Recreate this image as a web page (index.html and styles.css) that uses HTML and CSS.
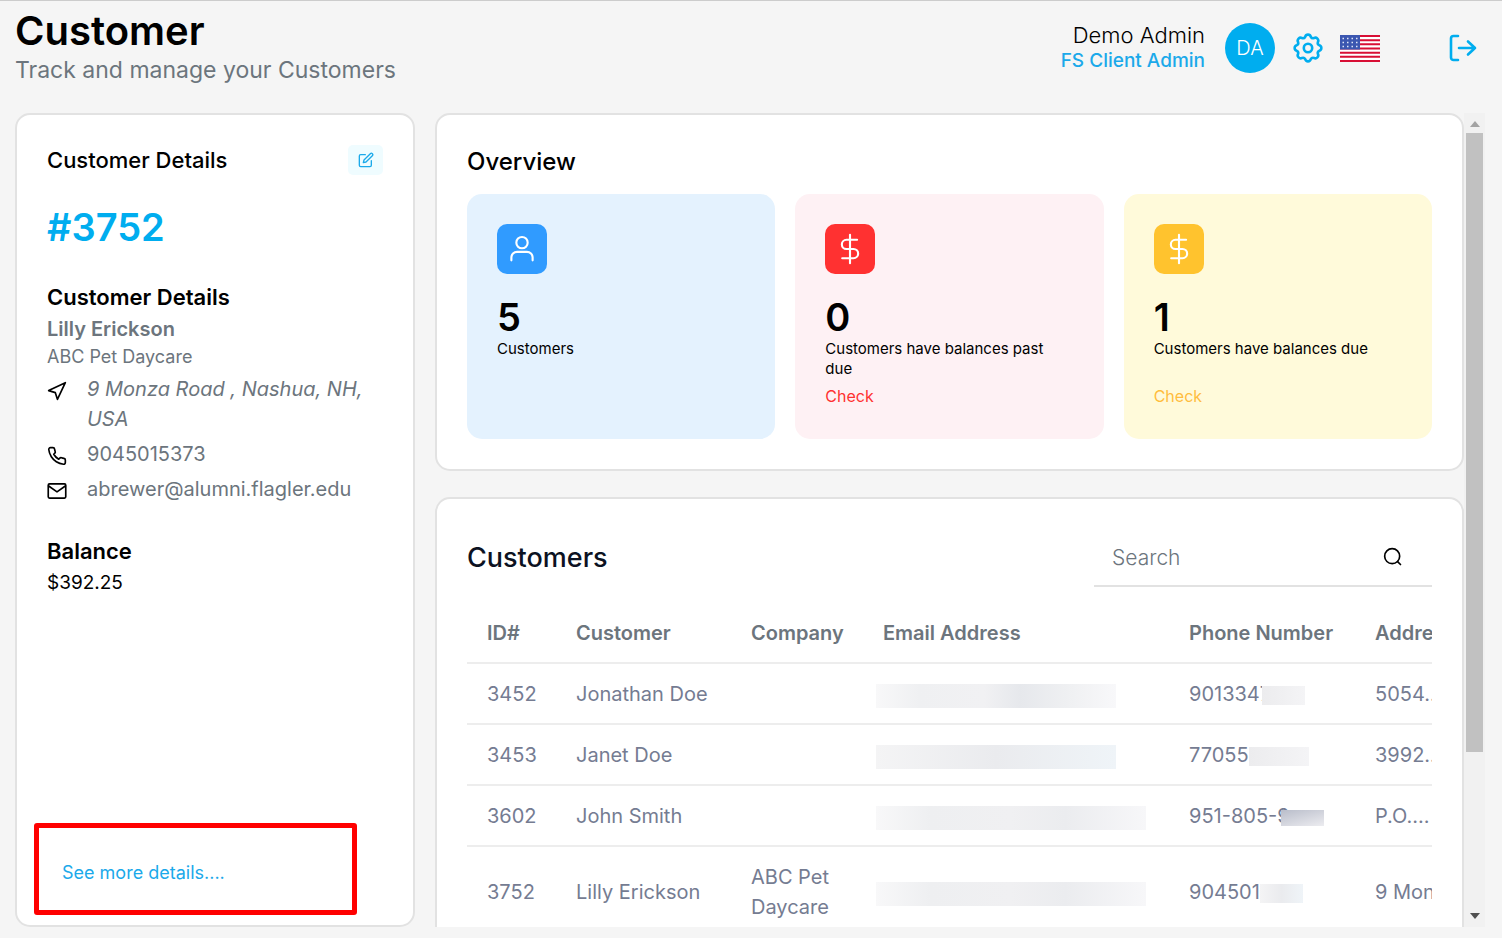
FILE: index.html
```html
<!DOCTYPE html>
<html lang="en">
<head>
    <meta charset="UTF-8">
    <meta name="viewport" content="width=device-width, initial-scale=1.0">
    <title>Customer</title>
    <link rel="stylesheet" href="styles.css">
</head>
<body>
    <header class="topbar">
        <div class="page-heading">
            <h1>Customer</h1>
            <p>Track and manage your Customers</p>
        </div>
        <div class="user-area">
            <div class="user-names">
                <span class="user-name">Demo Admin</span>
                <span class="user-role">FS Client Admin</span>
            </div>
            <div class="avatar">DA</div>
            <button class="icon-button settings" aria-label="Settings">
                <svg width="32" height="32" viewBox="0 0 32 32" fill="none" stroke="currentColor" stroke-width="2.6" stroke-linejoin="round"><circle cx="16" cy="16" r="4.200"/><path d="M13.200 4.800a2.900 2.900 0 0 1 5.600 0a2.600 2.600 0 0 0 3.150 1.300a2.900 2.900 0 0 1 3.950 3.950a2.600 2.600 0 0 0 1.300 3.150a2.900 2.900 0 0 1 0 5.600a2.600 2.600 0 0 0-1.300 3.150a2.900 2.900 0 0 1-3.950 3.950a2.600 2.600 0 0 0-3.150 1.300a2.900 2.900 0 0 1-5.600 0a2.600 2.600 0 0 0-3.150-1.300a2.900 2.900 0 0 1-3.950-3.950a2.600 2.600 0 0 0-1.300-3.150a2.900 2.900 0 0 1 0-5.600a2.600 2.600 0 0 0 1.300-3.150a2.900 2.900 0 0 1 3.950-3.950a2.600 2.600 0 0 0 3.150-1.300z"/></svg>
            </button>
            <button class="icon-button flag" aria-label="Language">
                <svg width="40" height="27" viewBox="0 0 40 27">
                    <rect width="40" height="27" fill="#fff"/>
                    <path d="M0 1h40M0 5.200h40M0 9.300h40M0 13.500h40M0 17.700h40M0 21.800h40M0 26h40" stroke="#d80f35" stroke-width="2"/>
                    <rect width="20" height="14.500" fill="#3b56b0"/>
                    <path d="M2.500 3.500h16M2.500 7.500h16M2.500 11.500h16" stroke="#dfe6f7" stroke-width="1.500" stroke-dasharray="1.500 3"/>
                </svg>
            </button>
            <button class="icon-button logout" aria-label="Log out">
                <svg width="28" height="28" viewBox="0 0 28 28" fill="none" stroke="currentColor" stroke-width="2.6" stroke-linecap="round" stroke-linejoin="round"><path d="M9 2H4.500a2.500 2.500 0 0 0-2.500 2.500v19a2.500 2.500 0 0 0 2.500 2.500H9M10 14h16M19 7.500l7 6.500-7 6.500"/></svg>
            </button>
        </div>
    </header>

    <main class="content">
        <section class="card details">
            <div class="details-head">
                <h2>Customer Details</h2>
                <button class="edit-button" aria-label="Edit customer">
                    <svg width="16" height="16" viewBox="0 0 24 24" fill="none" stroke="currentColor" stroke-width="2" stroke-linecap="round" stroke-linejoin="round"><path d="M11 4H4a2 2 0 0 0-2 2v14a2 2 0 0 0 2 2h14a2 2 0 0 0 2-2v-7"/><path d="M18.500 2.500a2.120 2.120 0 0 1 3 3L12 15l-4 1 1-4z"/></svg>
                </button>
            </div>
            <p class="customer-id">#3752</p>

            <h3>Customer Details</h3>
            <p class="customer-name">Lilly Erickson</p>
            <p class="customer-company">ABC Pet Daycare</p>
            <ul class="contact-list">
                <li>
                    <svg class="contact-icon" viewBox="0 0 24 24"><path d="M2 11.500L22 2l-9.500 20-2.500-8z"/></svg>
                    <address>9 Monza Road , Nashua, NH, USA</address>
                </li>
                <li>
                    <svg class="contact-icon" viewBox="0 0 24 24"><path d="M22 16.920v3a2 2 0 0 1-2.180 2 19.790 19.790 0 0 1-8.630-3.070 19.500 19.500 0 0 1-6-6 19.790 19.790 0 0 1-3.070-8.670A2 2 0 0 1 4.110 2h3a2 2 0 0 1 2 1.720c.13.960.36 1.900.7 2.810a2 2 0 0 1-.45 2.110L8.090 9.910a16 16 0 0 0 6 6l1.270-1.270a2 2 0 0 1 2.110-.45c.91.340 1.850.570 2.810.7A2 2 0 0 1 22 16.920z"/></svg>
                    <span>9045015373</span>
                </li>
                <li>
                    <svg class="contact-icon" viewBox="0 0 24 24"><rect x="1.500" y="3.500" width="21" height="17" rx="1.500"/><path d="M2 6l10 7 10-7"/></svg>
                    <span>abrewer@alumni.flagler.edu</span>
                </li>
            </ul>

            <h3>Balance</h3>
            <p class="balance">$392.25</p>

            <div class="more-box">
                <a href="#">See more details....</a>
            </div>
        </section>

        <div class="scroll-area">
            <section class="card overview">
                <h2>Overview</h2>
                <div class="tiles">
                    <div class="tile tile-blue">
                        <span class="tile-icon">
                            <svg width="34" height="34" viewBox="0 0 24 24"><circle cx="12" cy="7.500" r="4"/><path d="M4.500 20v-2a4 4 0 0 1 4-4h7a4 4 0 0 1 4 4v2"/></svg>
                        </span>
                        <strong>5</strong>
                        <p>Customers</p>
                    </div>
                    <div class="tile tile-red">
                        <span class="tile-icon">
                            <svg width="34" height="34" viewBox="0 0 24 24"><path d="M12 2v20M17 5.500H9.500a3.250 3.250 0 0 0 0 6.500h5a3.250 3.250 0 0 1 0 6.500H6.500"/></svg>
                        </span>
                        <strong>0</strong>
                        <p>Customers have balances past due</p>
                        <a href="#">Check</a>
                    </div>
                    <div class="tile tile-yellow">
                        <span class="tile-icon">
                            <svg width="34" height="34" viewBox="0 0 24 24"><path d="M12 2v20M17 5.500H9.500a3.250 3.250 0 0 0 0 6.500h5a3.250 3.250 0 0 1 0 6.500H6.500"/></svg>
                        </span>
                        <strong>1</strong>
                        <p>Customers have balances due</p>
                        <a href="#">Check</a>
                    </div>
                </div>
            </section>

            <section class="card customers">
                <div class="customers-head">
                    <h2>Customers</h2>
                    <div class="search">
                        <input type="text" placeholder="Search" aria-label="Search">
                        <button class="icon-button" aria-label="Search customers">
                            <svg width="20" height="20" viewBox="0 0 24 24" fill="none" stroke="currentColor" stroke-width="2" stroke-linecap="round"><circle cx="11" cy="11" r="9"/><path d="M17.500 17.500L21 21"/></svg>
                        </button>
                    </div>
                </div>
                <div class="table-wrap">
                    <table>
                        <colgroup>
                            <col class="col-id">
                            <col class="col-customer">
                            <col class="col-company">
                            <col class="col-email">
                            <col class="col-phone">
                            <col class="col-address">
                        </colgroup>
                        <thead>
                            <tr><th>ID#</th><th>Customer</th><th>Company</th><th>Email Address</th><th>Phone Number</th><th>Address</th></tr>
                        </thead>
                        <tbody>
                            <tr>
                                <td>3452</td><td>Jonathan Doe</td><td></td>
                                <td><span class="mask mask-email"></span></td>
                                <td>9013347<span class="mask mask-phone"></span></td>
                                <td>5054...</td>
                            </tr>
                            <tr>
                                <td>3453</td><td>Janet Doe</td><td></td>
                                <td><span class="mask mask-email mask-tint"></span></td>
                                <td>77055<span class="mask mask-phone mask-wide"></span></td>
                                <td>3992...</td>
                            </tr>
                            <tr>
                                <td>3602</td><td>John Smith</td><td></td>
                                <td><span class="mask mask-email mask-long"></span></td>
                                <td>951-805-9<span class="mask mask-phone mask-dark"></span></td>
                                <td>P.O....</td>
                            </tr>
                            <tr>
                                <td>3752</td><td>Lilly Erickson</td><td class="wrap">ABC Pet Daycare</td>
                                <td><span class="mask mask-email mask-long"></span></td>
                                <td>904501<span class="mask mask-phone mask-tint"></span></td>
                                <td>9 Monza</td>
                            </tr>
                        </tbody>
                    </table>
                </div>
            </section>
        </div>

        <div class="scrollbar" aria-hidden="true">
            <svg class="arrow arrow-up" viewBox="0 0 10 6"><path d="M5 0l5 6H0z"/></svg>
            <div class="track"><div class="thumb"></div></div>
            <svg class="arrow arrow-down" viewBox="0 0 10 6"><path d="M0 0h10L5 6z"/></svg>
        </div>
    </main>
</body>
</html>
```

FILE: styles.css
```css
/* Base styles */
* {
    box-sizing: border-box;
}

body {
    margin: 0;
    height: 100vh;
    display: flex;
    flex-direction: column;
    font-family: "Inter", sans-serif;
    font-size: 20px;
    line-height: 30px;
    color: #000;
    background: #f5f5f5;
    border-top: 1px solid #ccc;
    overflow: hidden;
}

h1, h2, h3, p, ul {
    margin: 0;
    padding: 0;
}

h2, h3 {
    font-weight: 600;
}

a {
    text-decoration: none;
}

svg {
    display: block;
}

.icon-button {
    padding: 0;
    border: none;
    background: none;
    color: #00adef;
    cursor: pointer;
}

/* Top bar */
.topbar {
    display: flex;
    justify-content: space-between;
    align-items: flex-start;
    height: 112px;
    padding: 8px 25px 0 15px;
}

.page-heading h1 {
    font-size: 40px;
    line-height: 44px;
    font-weight: 600;
}

.page-heading p {
    font-size: 23px;
    line-height: 34px;
    color: #6c757d;
}

.user-area {
    display: flex;
    align-items: center;
    padding-top: 13px;
}

.user-names {
    display: flex;
    flex-direction: column;
    align-items: flex-end;
    line-height: 26px;
    margin-right: 20px;
}

.user-name {
    font-size: 22px;
    font-weight: 300;
}

.user-role {
    font-size: 19px;
    font-weight: 500;
    color: #1ba9ea;
}

.avatar {
    width: 50px;
    height: 50px;
    border-radius: 50%;
    background: #00adef;
    color: #fff;
    font-weight: 300;
    line-height: 50px;
    text-align: center;
}

.settings {
    margin: 0 16px 0 17px;
}

.logout {
    margin-left: 69px;
}

/* Cards */
.content {
    flex: 1;
    min-height: 0;
    display: flex;
    padding: 0 17px 11px 15px;
}

.card {
    background: #fff;
    border: 2px solid #e2e2e2;
    border-radius: 15px;
    padding: 30px;
}

/* Customer details */
.details {
    flex: 0 0 400px;
    display: flex;
    flex-direction: column;
    margin-right: 20px;
}

.details-head {
    display: flex;
    justify-content: space-between;
    align-items: center;
}

.details-head h2 {
    font-size: 22px;
    font-weight: 500;
}

.edit-button {
    display: flex;
    justify-content: center;
    align-items: center;
    width: 35px;
    height: 30px;
    padding: 0;
    border: none;
    border-radius: 5px;
    background: #effcff;
    color: #1ba9ea;
}

.customer-id {
    margin: 28px 0 30px;
    font-size: 38px;
    line-height: 48px;
    font-weight: 600;
    color: #00adef;
}

.details h3 {
    font-size: 22px;
    line-height: 32px;
}

.customer-name {
    line-height: 32px;
    font-weight: 600;
    color: #6c757d;
}

.customer-company {
    font-size: 18px;
    line-height: 24px;
    color: #6c757d;
}

.contact-list {
    list-style: none;
    margin: 5px 0 26px;
    color: #6c757d;
}

.contact-list li {
    display: flex;
    gap: 20px;
    margin-bottom: 5px;
}

.contact-icon {
    flex: none;
    width: 20px;
    height: 20px;
    margin-top: 7px;
    fill: none;
    stroke: #000;
    stroke-width: 2;
    stroke-linecap: round;
    stroke-linejoin: round;
}

.balance {
    font-size: 19px;
    line-height: 32px;
}

.more-box {
    margin: auto 26px -20px -13px;
    padding: 34px 23px 26px;
    border: 5px solid #f00;
    border-radius: 3px;
    font-size: 18px;
    line-height: 22px;
}

.more-box a {
    color: #1ba9ea;
}

/* Right side */
.scroll-area {
    flex: 1;
    min-width: 0;
    display: flex;
    flex-direction: column;
    gap: 26px;
    overflow: hidden;
}

.scroll-area .card {
    flex: none;
}

.overview h2 {
    margin: 2px 0 17px;
    font-size: 24px;
    font-weight: 500;
}

.tiles {
    display: grid;
    grid-template-columns: repeat(3, 1fr);
    gap: 20px;
}

.tile {
    display: flex;
    flex-direction: column;
    align-items: flex-start;
    min-height: 245px;
    padding: 30px;
    border-radius: 15px;
}

.tile-blue {
    background: #e4f2fe;
}

.tile-red {
    background: #fef1f4;
}

.tile-yellow {
    background: #fffada;
}

.tile-icon {
    display: flex;
    justify-content: center;
    align-items: center;
    width: 50px;
    height: 50px;
    border-radius: 10px;
}

.tile-icon svg {
    fill: none;
    stroke: #fff;
    stroke-width: 1.5;
    stroke-linecap: round;
    stroke-linejoin: round;
}

.tile-blue .tile-icon {
    background: #309bff;
}

.tile-red .tile-icon {
    background: #ff3131;
}

.tile-yellow .tile-icon {
    background: #ffc32e;
}

.tile strong {
    margin-top: 21px;
    font-size: 38px;
    line-height: 44px;
    font-weight: 600;
}

.tile p {
    min-height: 40px;
    font-size: 15px;
    line-height: 20px;
}

.tile a {
    margin-top: 7px;
    font-size: 16px;
    line-height: 20px;
}

.tile-red a {
    color: #ff3131;
}

.tile-yellow a {
    color: #ffbd3e;
}

/* Customers table */
.customers-head {
    display: flex;
    justify-content: space-between;
    align-items: center;
    height: 58px;
    margin-bottom: 16px;
}

.customers-head h2 {
    font-size: 27px;
    font-weight: 500;
    color: #0c1222;
}

.search {
    display: flex;
    align-items: center;
    width: 338px;
    height: 58px;
    padding: 0 29px 0 18px;
    border-bottom: 2px solid #e2e2e2;
}

.search input {
    flex: 1;
    min-width: 0;
    padding: 0;
    border: none;
    outline: none;
    background: none;
    font-family: inherit;
    font-size: 21px;
    font-weight: 300;
}

.search input::placeholder {
    color: #6c757d;
}

.search .icon-button {
    color: #000;
}

.table-wrap {
    overflow: hidden;
}

table {
    width: 100%;
    min-width: 1020px;
    table-layout: fixed;
    border-collapse: separate;
    border-spacing: 0;
    color: #757c92;
}

.col-id {
    width: 89px;
}

.col-customer {
    width: 175px;
}

.col-company {
    width: 132px;
}

.col-email {
    width: 306px;
}

.col-phone {
    width: 186px;
}

th, td {
    padding: 15px 0 14px 20px;
    border-bottom: 2px solid #ededed;
    text-align: left;
    white-space: nowrap;
}

th {
    font-weight: 600;
    color: #6c757d;
}

td.wrap {
    white-space: normal;
}

/* Masked values */
.mask {
    display: inline-block;
    height: 24px;
    vertical-align: middle;
    background: linear-gradient(90deg, #f8f8f9, #eff0f2 18%, #f1f1f3 45%, #e6e8ec 60%, #eff0f2 80%, #f8f8fa);
}

.mask-email {
    width: 240px;
    margin-left: -7px;
}

.mask-long {
    width: 270px;
    background: linear-gradient(90deg, #f8f8f9, #eeeff1 20%, #f0f0f2 50%, #ebecef 70%, #f7f7f9);
}

.mask-phone {
    width: 43px;
    height: 19px;
    margin-left: -9px;
    background: linear-gradient(90deg, #ececee, #f4f4f6);
}

.mask-wide {
    width: 60px;
    margin-left: 0;
}

.mask-dark {
    height: 16px;
    background: linear-gradient(165deg, #b9bdca, #ececf0);
}

.mask-tint {
    background: linear-gradient(90deg, #f4f4f5, #eaebee 50%, #eff4f8);
}

.mask-phone.mask-tint {
    margin-left: 0;
}

/* Scrollbar */
.scrollbar {
    display: flex;
    flex-direction: column;
    align-items: center;
    width: 21px;
    background: #f1f1f1;
}

.arrow {
    width: 10px;
    height: 6px;
}

.arrow-up {
    margin: 8px 0 6px;
    fill: #a3a3a3;
}

.arrow-down {
    margin: 6px 0 8px;
    fill: #505050;
}

.track {
    flex: 1;
    width: 17px;
}

.thumb {
    height: 80%;
    background: #c1c1c1;
}
```
